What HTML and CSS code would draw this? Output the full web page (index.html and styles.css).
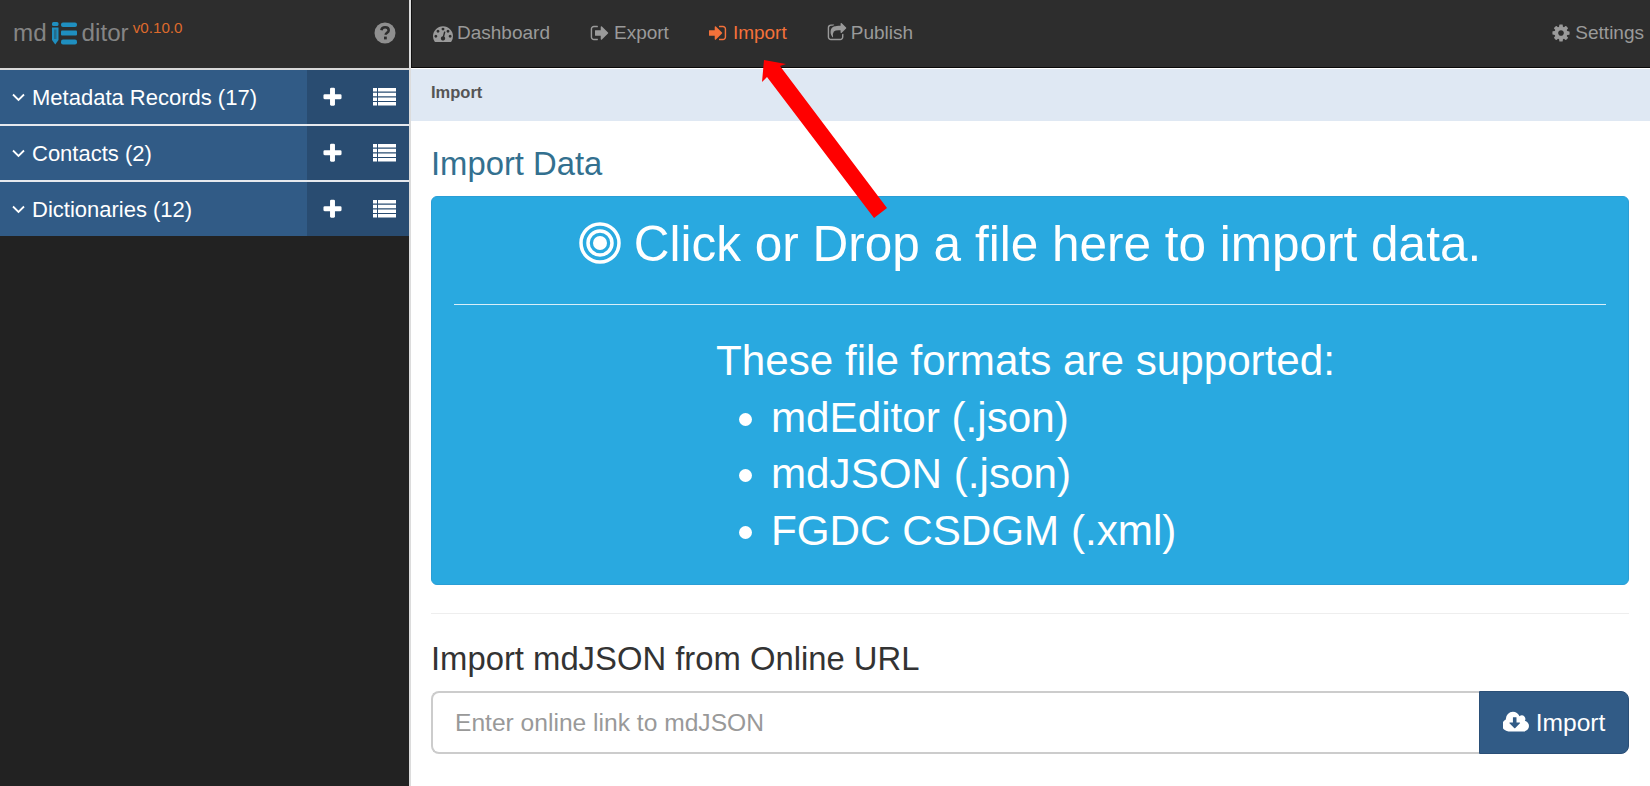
FILE: index.html
```html
<!DOCTYPE html>
<html lang="en">
<head>
<meta charset="utf-8">
<title>mdEditor Import</title>
<link rel="stylesheet" href="styles.css">
</head>
<body>
<svg width="0" height="0" class="defs">
  <symbol id="i-plus" viewBox="0 0 1792 1792"><path d="M1600 736v192q0 40-28 68t-68 28h-416v416q0 40-28 68t-68 28h-192q-40 0-68-28t-28-68v-416h-416q-40 0-68-28t-28-68v-192q0-40 28-68t68-28h416v-416q0-40 28-68t68-28h192q40 0 68 28t28 68v416h416q40 0 68 28t28 68z"/></symbol>
  <symbol id="i-list" viewBox="0 0 23 18"><path d="M0 0h4v3.500H0zM5 0h18v3.500H5zM0 4.700h4v3.500H0zM5 4.700h18v3.500H5zM0 9.400h4v3.500H0zM5 9.400h18v3.500H5zM0 14.100h4v3.500H0zM5 14.100h18v3.500H5z"/></symbol>
  <symbol id="i-down" viewBox="0 0 13 9"><path d="M1 1.500l5.500 5.500 5.500-5.500" fill="none" stroke="currentColor" stroke-width="1.800"/></symbol>
</svg>
<div class="app">
  <aside class="sidebar">
    <div class="brand">
      <span class="logo">md</span>
      <svg class="logo-mark" viewBox="0 0 25 23"><rect x="0" y="0" width="6.500" height="4" rx="1.500"/><path d="M0 5.500h6.500V18l-3.250 4.500L0 18z"/><path d="M2 7.500h2.500V17H2z" fill="#2d2d2d" opacity=".35"/><rect x="9" y="0.500" width="16" height="4.500" rx="2"/><rect x="9" y="8.500" width="16" height="5" rx="1"/><rect x="9" y="17.500" width="16" height="5" rx="2"/></svg>
      <span class="logo">ditor</span>
      <sup class="version">v0.10.0</sup>
      <svg class="help" viewBox="0 0 22 22"><circle cx="11" cy="11" r="10.500"/><path d="M7.400 8.200c.3-2.100 1.800-3 3.700-3 2 0 3.600 1.200 3.600 3 0 2.500-3 2.600-3 4.600" fill="none" stroke="#2d2d2d" stroke-width="2.600"/><rect x="10" y="14.600" width="2.800" height="2.800" fill="#2d2d2d"/></svg>
    </div>
    <ul class="records">
      <li class="record"><span class="record-label"><svg class="chev"><use href="#i-down"/></svg>Metadata Records (17)</span><span class="record-actions"><svg class="act-plus"><use href="#i-plus"/></svg><svg class="act-list"><use href="#i-list"/></svg></span></li>
      <li class="record"><span class="record-label"><svg class="chev"><use href="#i-down"/></svg>Contacts (2)</span><span class="record-actions"><svg class="act-plus"><use href="#i-plus"/></svg><svg class="act-list"><use href="#i-list"/></svg></span></li>
      <li class="record"><span class="record-label"><svg class="chev"><use href="#i-down"/></svg>Dictionaries (12)</span><span class="record-actions"><svg class="act-plus"><use href="#i-plus"/></svg><svg class="act-list"><use href="#i-list"/></svg></span></li>
    </ul>
  </aside>
  <main class="main">
    <nav class="nav">
      <a class="nav-item"><svg class="nav-icon" viewBox="0 0 1792 1792"><path d="M384 1184q0-53-37.500-90.500t-90.500-37.500-90.500 37.500-37.500 90.500 37.500 90.500 90.500 37.500 90.500-37.500 37.500-90.500zm192-448q0-53-37.500-90.500t-90.500-37.500-90.500 37.500-37.500 90.500 37.500 90.500 90.500 37.500 90.500-37.500 37.500-90.500zm428 481l101-382q6-26-7.500-48.500t-38.500-29.500-48 6.500-30 39.500l-101 382q-60 5-107 43.500t-63 98.500q-20 77 20 146t117 89 146-20 89-117q16-60-6-117t-72-91zm660-33q0-53-37.500-90.500t-90.500-37.500-90.500 37.500-37.500 90.500 37.500 90.500 90.500 37.500 90.500-37.500 37.500-90.500zm-640-640q0-53-37.500-90.500t-90.500-37.500-90.500 37.500-37.500 90.500 37.500 90.500 90.500 37.500 90.500-37.500 37.500-90.500zm448 192q0-53-37.500-90.500t-90.500-37.500-90.500 37.500-37.500 90.500 37.500 90.500 90.500 37.500 90.500-37.500 37.500-90.500zm320 448q0 261-141 483-19 29-54 29h-1402q-35 0-54-29-141-221-141-483 0-182 71-348t191-286 286-191 348-71 348 71 286 191 191 286 71 348z"/></svg>Dashboard</a>
      <a class="nav-item"><svg class="nav-icon" viewBox="0 0 1792 1792"><path d="M704 1440q0 4 1 20t.5 26.500-3 23.500-10 19.500-20.500 6.500h-320q-119 0-203.500-84.500t-84.500-203.500v-704q0-119 84.500-203.500t203.500-84.500h320q13 0 22.500 9.500t9.500 22.500q0 4 1 20t.5 26.500-3 23.500-10 19.500-20.500 6.500h-320q-66 0-113 47t-47 113v704q0 66 47 113t113 47h312l11.500 1 11.500 3 8 5.500 7 9 2 13.500zm928-544q0 26-19 45l-544 544q-19 19-45 19t-45-19-19-45v-288h-448q-26 0-45-19t-19-45v-384q0-26 19-45t45-19h448v-288q0-26 19-45t45-19 45 19l544 544q19 19 19 45z"/></svg>Export</a>
      <a class="nav-item nav-item-active"><svg class="nav-icon" viewBox="0 0 1792 1792"><path d="M1184 896q0 26-19 45l-544 544q-19 19-45 19t-45-19-19-45v-288h-448q-26 0-45-19t-19-45v-384q0-26 19-45t45-19h448v-288q0-26 19-45t45-19 45 19l544 544q19 19 19 45zm352-352v704q0 119-84.500 203.500t-203.500 84.500h-320q-13 0-22.500-9.500t-9.500-22.500q0-4-1-20t-.5-26.500 3-23.500 10-19.500 20.500-6.500h320q66 0 113-47t47-113v-704q0-66-47-113t-113-47h-288-11-13t-11.500-1-11.500-3-8-5.500-7-9-2-13.500q0-4-1-20t-.5-26.500 3-23.500 10-19.500 20.500-6.500h320q119 0 203.500 84.500t84.500 203.500z"/></svg>Import</a>
      <a class="nav-item"><svg class="nav-icon" viewBox="0 0 1792 1792"><path d="M1472 989v259q0 119-84.500 203.500t-203.500 84.500h-832q-119 0-203.500-84.500t-84.500-203.500v-832q0-119 84.500-203.500t203.500-84.500h255q13 0 22.500 9.500t9.500 22.500q0 27-26 32-77 26-133 60-10 4-16 4h-112q-66 0-113 47t-47 113v832q0 66 47 113t113 47h832q66 0 113-47t47-113v-214q0-19 18-29 28-13 54-37 16-16 35-8 21 9 21 29zm237-496l-384 384q-18 19-45 19-12 0-25-5-39-17-39-59v-192h-160q-323 0-438 131-119 137-74 473 3 23-20 34-8 2-12 2-16 0-26-13-10-14-21-31t-39.500-68.500-49.500-99.500-38.500-114-17.500-122q0-49 3.500-91t14-90 28-88 47-81.500 68.500-74 94.500-61.500 124.500-48.500 159.500-30.500 196.500-11h160v-192q0-42 39-59 13-5 25-5 26 0 45 19l384 384q19 19 19 45t-19 45z"/></svg>Publish</a>
      <a class="nav-item nav-item-end"><svg class="nav-icon" viewBox="0 0 1792 1792"><path d="M1152 896q0-106-75-181t-181-75-181 75-75 181 75 181 181 75 181-75 75-181zm512-109v222q0 12-8 23t-20 13l-185 28q-19 54-39 91 35 50 107 138 10 12 10 25t-9 23q-27 37-99 108t-94 71q-12 0-26-9l-138-108q-44 23-91 38-16 136-29 186-7 28-36 28h-222q-14 0-24.500-8.500t-11.500-21.500l-28-184q-49-16-90-37l-141 107q-10 9-25 9-14 0-25-11-126-114-165-168-7-10-7-23 0-12 8-23 15-21 51-66.500t54-70.500q-27-50-41-99l-183-27q-13-2-21-12.500t-8-23.500v-222q0-12 8-23t19-13l186-28q14-46 39-92-40-57-107-138-10-12-10-24 0-10 9-23 26-36 98.500-107.500t94.500-71.500q13 0 26 10l138 107q44-23 91-38 16-136 29-186 7-28 36-28h222q14 0 24.500 8.500t11.500 21.500l28 184q49 16 90 37l142-107q9-9 24-9 13 0 25 10 129 119 165 170 7 8 7 22 0 12-8 23-15 21-51 66.500t-54 70.500q26 50 41 98l183 28q13 2 21 12.500t8 23.500z"/></svg>Settings</a>
    </nav>
    <div class="crumb">Import</div>
    <section class="content">
      <h3 class="title">Import Data</h3>
      <div class="drop">
        <div class="drop-head"><svg class="bullseye" viewBox="0 0 42 42"><circle cx="21" cy="21" r="19" /><circle cx="21" cy="21" r="12"/><circle class="dot" cx="21" cy="21" r="7"/></svg>Click or Drop a file here to import data.</div>
        <hr class="drop-rule">
        <div class="formats">
          <div class="formats-inner">
            <p class="formats-title">These file formats are supported:</p>
            <ul class="formats-list">
              <li>mdEditor (.json)</li>
              <li>mdJSON (.json)</li>
              <li>FGDC CSDGM (.xml)</li>
            </ul>
          </div>
        </div>
      </div>
      <hr class="rule">
      <h4 class="subtitle">Import mdJSON from Online URL</h4>
      <div class="url-group">
        <input class="url-input" type="text" placeholder="Enter online link to mdJSON">
        <button class="url-btn" type="button"><svg class="btn-icon" viewBox="0 0 1920 1792"><path d="M1216 928q0-14-9-23t-23-9h-224v-352q0-13-9.500-22.500t-22.500-9.500h-192q-13 0-22.500 9.500t-9.500 22.500v352h-224q-14 0-23 9t-9 23q0 12 10 24l352 352q9 9 23 9t23-9l351-351q11-13 11-25zm640 224q0 159-112.500 271.500t-271.500 112.500h-1088q-185 0-316.500-131.500t-131.500-316.500q0-130 70-240t188-165q-2-30-2-43 0-212 150-362t362-150q156 0 285.500 87t188.500 231q71-62 166-62 106 0 181 75t75 181q0 76-41 138 130 31 213.500 135.500t83.500 238.500z"/></svg>Import</button>
      </div>
    </section>
  </main>
</div>
<svg class="arrow" viewBox="0 0 1650 786"><polygon points="764,60 786,64 780,66 887,208 874,218 767,77 762,82"/></svg>
</body>
</html>
```

FILE: styles.css
```css
* { box-sizing: border-box; }
html, body { height: 100%; }
body {
  margin: 0;
  overflow: hidden;
  background: #fff;
  font-family: "Liberation Sans", Arial, sans-serif;
}
.defs { position: absolute; }
.app { display: flex; height: 786px; }

.sidebar {
  width: 411px;
  flex: none;
  background: #222;
  border-right: 2px solid #dcdcdc;
}
.brand {
  height: 70px;
  display: flex;
  align-items: center;
  padding: 0 14px 2px 13px;
  background: #2d2d2d;
  border-bottom: 2px solid #d8d8d8;
}
.logo { font-size: 24.200px; color: #858585; }
.logo-mark { width: 25px; height: 23px; margin: 0 5px 0 5px; fill: #1f8fc0; }
.version {
  font-size: 15.200px;
  color: #dd6a2c;
  margin: -12px 0 0 4px;
  flex: 1;
}
.help { width: 22px; height: 22px; margin: 0 -1px 1px 0; fill: #8f8f8f; }

.records { list-style: none; margin: 0; padding: 0; }
.record {
  display: flex;
  height: 54px;
  margin-bottom: 2px;
  background: #315b86;
  color: #fff;
  font-size: 22px;
  box-shadow: 0 2px 0 #e6e9ee;
}
.record:last-child { box-shadow: none; }
.record-label {
  flex: 1;
  display: flex;
  align-items: center;
  padding: 1px 0 0 12px;
}
.chev { width: 13px; height: 9px; margin-right: 7px; color: #fff; }
.record-actions {
  width: 102px;
  display: flex;
  align-items: center;
  padding-left: 14px;
  background: #294c71;
}
.act-plus { width: 23px; height: 23px; fill: #fff; }
.act-list { width: 23px; height: 18px; margin-left: 29px; fill: #fff; }

.main { flex: 1; min-width: 0; }
.nav {
  height: 68px;
  display: flex;
  align-items: center;
  gap: 40px;
  padding: 0 6px 2px 21px;
  background: #2d2d2d;
  border-left: 1px solid #111;
  border-bottom: 1px solid #0a0a0a;
  font-size: 19px;
  color: #9a9a9a;
}
.nav-item { display: flex; align-items: center; white-space: nowrap; }
.nav-item-active { color: #f4713a; }
.nav-item-end { margin-left: auto; }
.nav-icon { width: 20px; height: 20px; margin-right: 4px; fill: currentColor; }

.crumb {
  height: 52px;
  margin-top: 1px;
  padding: 11px 20px 0;
  background: #dfe8f3;
  font-size: 16.500px;
  line-height: 24px;
  font-weight: 700;
  color: #555;
}
.content { padding: 0 21px 0 20px; }
.title {
  margin: 25px 0 0;
  font-size: 32.800px;
  line-height: 36px;
  font-weight: 400;
  color: #33708f;
}
.drop {
  height: 389px;
  margin-top: 14px;
  border: 1px solid #2a9ed6;
  border-radius: 6px;
  background: #29a9e0;
  color: #fff;
  padding: 0 22px;
}
.drop-head {
  height: 107px;
  display: flex;
  align-items: center;
  justify-content: center;
  font-size: 49.500px;
  padding-bottom: 15px;
}
.bullseye { width: 42px; height: 42px; margin-right: 13px; fill: none; stroke: #fff; stroke-width: 3.500; }
.bullseye .dot { fill: #fff; stroke: none; }
.drop-rule { margin: 0; border: 0; border-top: 1px solid #d8eef9; }
.formats { display: flex; justify-content: center; padding-top: 28px; }
.formats-inner { width: max-content; margin-right: 9px; font-size: 42.200px; line-height: 56.500px; white-space: nowrap; }
.formats-title { margin: 0; }
.formats-list { margin: 0; padding: 0 0 0 55px; }

.rule { margin: 28px 0 0; border: 0; border-top: 1px solid #eee; }
.subtitle {
  margin: 27px 0 0;
  font-size: 32.800px;
  line-height: 36px;
  font-weight: 400;
  color: #333;
}
.url-group { display: flex; height: 63px; margin-top: 14px; }
.url-input {
  flex: 1;
  min-width: 0;
  padding: 0 22px;
  border: 2px solid #ccc;
  border-right: 0;
  border-radius: 8px 0 0 8px;
  font: 24.600px "Liberation Sans", Arial, sans-serif;
  color: #555;
}
.url-input::placeholder { color: #999; opacity: 1; }
.url-btn {
  width: 150px;
  display: flex;
  align-items: center;
  justify-content: center;
  border: 1px solid #2a4f77;
  border-radius: 0 8px 8px 0;
  background: #315b86;
  color: #fff;
  font: 24.600px "Liberation Sans", Arial, sans-serif;
}
.btn-icon { width: 27px; height: 25px; margin-right: 6px; fill: #fff; }

.arrow {
  position: absolute;
  left: 0;
  top: 0;
  width: 1650px;
  height: 786px;
  pointer-events: none;
  fill: #ff0000;
}
```
